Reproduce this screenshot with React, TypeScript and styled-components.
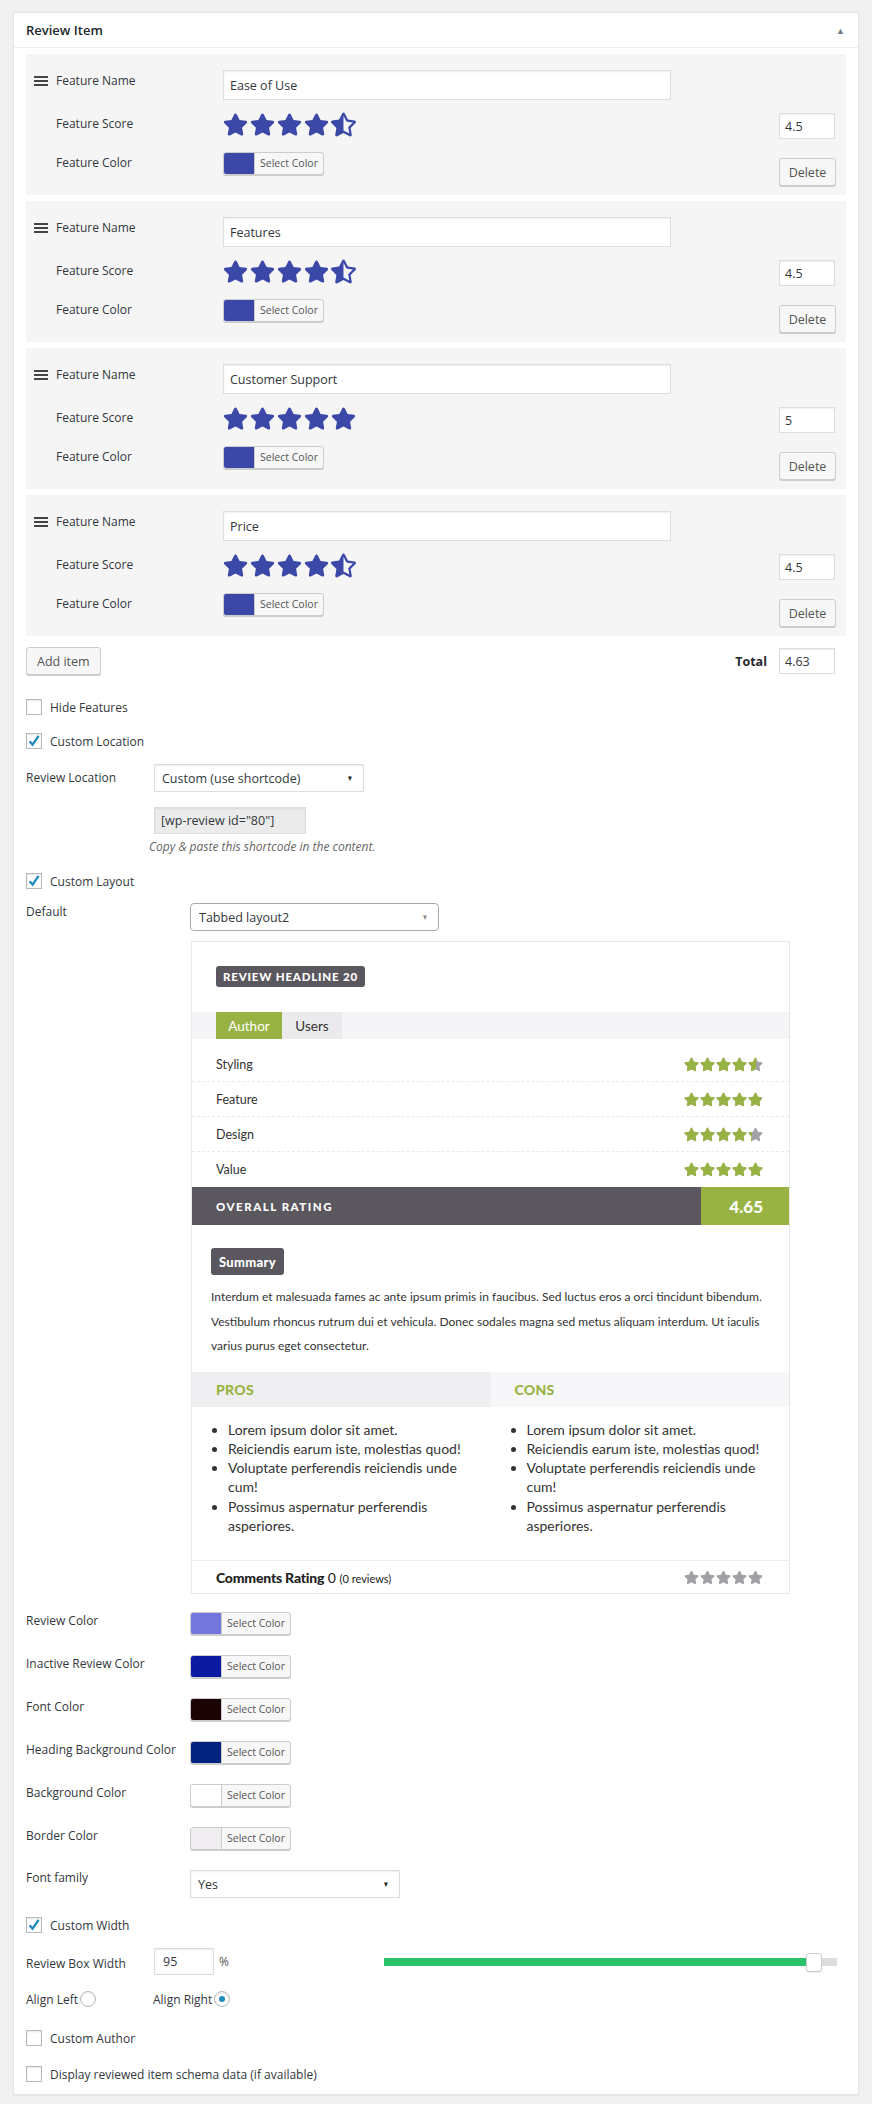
import React from 'react';
import styled, { createGlobalStyle } from 'styled-components';
import { FaStar, FaStarHalfAlt } from 'react-icons/fa';

const GlobalStyle = createGlobalStyle`
  * { box-sizing: border-box; }
  body {
    margin: 0;
    background: #f1f1f1;
    font-family: "Open Sans", "Noto Sans", sans-serif;
    font-size: 12px;
    color: #32373c;
  }
`;

const features = [
  { name: 'Ease of Use', score: '4.5' },
  { name: 'Features', score: '4.5' },
  { name: 'Customer Support', score: '5' },
  { name: 'Price', score: '4.5' },
];

const ratings = [
  { label: 'Styling', pct: 91 },
  { label: 'Feature', pct: 98 },
  { label: 'Design', pct: 86 },
  { label: 'Value', pct: 100 },
];

const listItems = [
  'Lorem ipsum dolor sit amet.',
  'Reiciendis earum iste, molestias quod!',
  'Voluptate perferendis reiciendis unde cum!',
  'Possimus aspernatur perferendis asperiores.',
];

const colorRows = [
  { label: 'Review Color', color: '#7476dc' },
  { label: 'Inactive Review Color', color: '#0b1aa0' },
  { label: 'Font Color', color: '#1b0204' },
  { label: 'Heading Background Color', color: '#03237f' },
  { label: 'Background Color', color: '#ffffff' },
  { label: 'Border Color', color: '#efedef' },
];

const boxWidth = 95;
const sliderPos = 93.2;

export default function App() {
  return (
    <Page>
      <GlobalStyle />
      <Panel>
        <PanelHeader>
          <PanelTitle>Review Item</PanelTitle>
          <Toggle>▲</Toggle>
        </PanelHeader>
        <PanelBody>
          <Items>
            {features.map((f) => (
              <Item key={f.name}>
                <Handle>
                  <svg width="14" height="10" viewBox="0 0 14 10">
                    <rect x="0" y="0" width="14" height="2" fill="#444" />
                    <rect x="0" y="4" width="14" height="2" fill="#444" />
                    <rect x="0" y="8" width="14" height="2" fill="#444" />
                  </svg>
                </Handle>
                <ItemLabel>Feature Name</ItemLabel>
                <NameInput>{f.name}</NameInput>
                <ItemLabel>Feature Score</ItemLabel>
                <EditStars>
                  <FaStar size={25} />
                  <FaStar size={25} />
                  <FaStar size={25} />
                  <FaStar size={25} />
                  {f.score === '5' ? <FaStar size={25} /> : <FaStarHalfAlt size={25} />}
                </EditStars>
                <SmallInput>{f.score}</SmallInput>
                <ItemLabel>Feature Color</ItemLabel>
                <ColorPick color="#3b48a8" />
                <DeleteButton>Delete</DeleteButton>
              </Item>
            ))}
          </Items>

          <ItemsFooter>
            <Button>Add item</Button>
            <TotalGroup>
              <TotalLabel>Total</TotalLabel>
              <SmallInput>4.63</SmallInput>
            </TotalGroup>
          </ItemsFooter>

          <CheckRow $gap={24}>
            <Checkbox />
            Hide Features
          </CheckRow>
          <CheckRow $gap={18}>
            <Checkbox checked />
            Custom Location
          </CheckRow>

          <FieldRow $gap={15} $center>
            <FieldLabel $width={128}>Review Location</FieldLabel>
            <Select $width={210}>
              Custom (use shortcode)
              <SelectArrow>▼</SelectArrow>
            </Select>
          </FieldRow>
          <Shortcode>[wp-review id="80"]</Shortcode>
          <Hint>Copy &amp; paste this shortcode in the content.</Hint>

          <CheckRow $gap={18}>
            <Checkbox checked />
            Custom Layout
          </CheckRow>

          <FieldRow $gap={14}>
            <FieldLabel $width={164}>Default</FieldLabel>
            <Select $width={249} $rounded>
              Tabbed layout2
              <SelectArrow $light>▼</SelectArrow>
            </Select>
          </FieldRow>

          <ReviewBox>
            <ReviewHead>
              <Badge>Review Headline 20</Badge>
            </ReviewHead>
            <TabBar>
              <Tab $active>Author</Tab>
              <Tab>Users</Tab>
            </TabBar>
            <RatingList>
              {ratings.map((r) => (
                <RatingRow key={r.label}>
                  <span>{r.label}</span>
                  <RatingStars pct={r.pct} />
                </RatingRow>
              ))}
            </RatingList>
            <OverallBar>
              <OverallLabel>Overall Rating</OverallLabel>
              <OverallScore>4.65</OverallScore>
            </OverallBar>
            <SummaryBlock>
              <SummaryBadge>Summary</SummaryBadge>
              <SummaryText>
                Interdum et malesuada fames ac ante ipsum primis in faucibus. Sed luctus eros a orci tincidunt
                bibendum. Vestibulum rhoncus rutrum dui et vehicula. Donec sodales magna sed metus aliquam interdum.
                Ut iaculis varius purus eget consectetur.
              </SummaryText>
            </SummaryBlock>
            <ProsCons>
              <ProsHead $tone="#efeef0">Pros</ProsHead>
              <ProsHead $tone="#f7f6f8">Cons</ProsHead>
              <ProsList>
                {listItems.map((t) => (
                  <li key={t}>{t}</li>
                ))}
              </ProsList>
              <ProsList>
                {listItems.map((t) => (
                  <li key={t}>{t}</li>
                ))}
              </ProsList>
            </ProsCons>
            <CommentsRow>
              <span>
                <strong>Comments Rating</strong> <CommentScore>0</CommentScore>{' '}
                <CommentCount>(0 reviews)</CommentCount>
              </span>
              <RatingStars pct={0} />
            </CommentsRow>
          </ReviewBox>

          {colorRows.map((c, i) => (
            <FieldRow key={c.label} $gap={i === 0 ? 18 : 20}>
              <FieldLabel $width={164}>{c.label}</FieldLabel>
              <ColorPick color={c.color} />
            </FieldRow>
          ))}

          <FieldRow $gap={20}>
            <FieldLabel $width={164} $lh={16}>Font family</FieldLabel>
            <Select $width={210}>
              Yes
              <SelectArrow>▼</SelectArrow>
            </Select>
          </FieldRow>

          <CheckRow $gap={19}>
            <Checkbox checked />
            Custom Width
          </CheckRow>

          <WidthRow>
            <FieldLabel $width={128}>Review Box Width</FieldLabel>
            <WidthInput>{boxWidth}</WidthInput>
            <Percent>%</Percent>
            <Slider>
              <SliderFill style={{ width: `${sliderPos + 1}%` }} />
              <SliderHandle style={{ left: `${sliderPos}%` }} />
            </Slider>
          </WidthRow>

          <AlignRow>
            <AlignOption $width={127}>
              Align Left
              <Radio />
            </AlignOption>
            <AlignOption>
              Align Right
              <Radio checked />
            </AlignOption>
          </AlignRow>

          <CheckRow $gap={23}>
            <Checkbox />
            Custom Author
          </CheckRow>
          <CheckRow $gap={20}>
            <Checkbox />
            Display reviewed item schema data (if available)
          </CheckRow>
        </PanelBody>
      </Panel>
    </Page>
  );
}

function Checkbox({ checked = false }: { checked?: boolean }) {
  return (
    <CheckBoxBox>
      {checked && (
        <svg width="14" height="14" viewBox="0 0 14 14">
          <path d="M2.6 7.2 L5.6 10.6 L11.6 1.8" fill="none" stroke="#1e8cbe" strokeWidth="2.3" />
        </svg>
      )}
    </CheckBoxBox>
  );
}

function Radio({ checked = false }: { checked?: boolean }) {
  return <RadioCircle>{checked && <RadioDot />}</RadioCircle>;
}

function ColorPick({ color }: { color: string }) {
  return (
    <ColorButton>
      <Swatch $color={color} />
      <ColorText>Select Color</ColorText>
    </ColorButton>
  );
}

function RatingStars({ pct }: { pct: number }) {
  const five = [0, 1, 2, 3, 4];
  return (
    <StarsWrap>
      {five.map((i) => (
        <FaStar key={i} size={15} />
      ))}
      <StarsFill style={{ width: `${pct}%` }}>
        {five.map((i) => (
          <FaStar key={i} size={15} />
        ))}
      </StarsFill>
    </StarsWrap>
  );
}

const Page = styled.div`
  padding: 12px 13px 13px;
`;

const Panel = styled.div`
  background: #fff;
  border: 1px solid #e5e5e5;
  box-shadow: 0 1px 1px rgba(0, 0, 0, 0.04);
`;

const PanelHeader = styled.div`
  display: flex;
  align-items: center;
  justify-content: space-between;
  height: 35px;
  padding: 0 12px;
  border-bottom: 1px solid #eee;
`;

const PanelTitle = styled.h2`
  margin: 0;
  font-size: 13px;
  font-weight: 600;
  color: #23282d;
`;

const Toggle = styled.span`
  font-size: 9px;
  color: #72777c;
  margin-right: 1px;
`;

const PanelBody = styled.div`
  display: flex;
  flex-direction: column;
  align-items: flex-start;
  padding: 6px 12px 12px;
`;

const Items = styled.div`
  display: flex;
  flex-direction: column;
  gap: 6px;
  width: 100%;
`;

const Item = styled.div`
  display: grid;
  grid-template-columns: 30px 167px 1fr 57px;
  grid-template-rows: 30px 26px 34px;
  row-gap: 13px;
  justify-items: start;
  padding: 16px 10px 9px 0;
  background: #f5f5f5;
`;

const Handle = styled.div`
  padding: 6px 0 0 8px;
  line-height: 0;
`;

const ItemLabel = styled.div`
  grid-column: 2;
  padding-top: 2px;
  line-height: 18px;
  color: #32373c;
`;

const fieldBox = `
  background: #fff;
  border: 1px solid #ddd;
  box-shadow: inset 0 1px 2px rgba(0, 0, 0, 0.07);
  color: #32373c;
  display: flex;
  align-items: center;
`;

const NameInput = styled.div`
  ${fieldBox}
  width: 448px;
  height: 30px;
  padding: 0 6px;
  font-size: 12.5px;
`;

const EditStars = styled.div`
  display: flex;
  gap: 2px;
  height: 22px;
  align-items: center;
  color: #3b48a8;
`;

const SmallInput = styled.div`
  ${fieldBox}
  width: 56px;
  height: 26px;
  padding: 0 5px;
  font-size: 12.5px;
`;

const Button = styled.div`
  display: inline-flex;
  align-items: center;
  height: 28px;
  padding: 0 10px;
  background: #f7f7f7;
  border: 1px solid #ccc;
  border-radius: 3px;
  box-shadow: 0 1px 0 #ccc;
  color: #555;
  font-size: 12.5px;
`;

const DeleteButton = styled(Button)`
  align-self: end;
  width: 57px;
  justify-content: center;
  padding: 0;
`;

const ColorButton = styled.div`
  display: inline-flex;
  align-self: start;
  justify-self: start;
  height: 23px;
  border: 1px solid #ccc;
  border-radius: 3px;
  box-shadow: 0 1px 0 #ccc;
  overflow: hidden;
  background: #f7f7f7;
`;

const Swatch = styled.span<{ $color: string }>`
  width: 30px;
  background: ${(p) => p.$color};
`;

const ColorText = styled.span`
  width: 69px;
  border-left: 1px solid #ccc;
  font-size: 10.5px;
  line-height: 21px;
  text-align: center;
  color: #555;
`;

const ItemsFooter = styled.div`
  display: flex;
  align-items: center;
  justify-content: space-between;
  width: 100%;
  margin-top: 11px;
  padding-right: 11px;
`;

const TotalGroup = styled.div`
  display: flex;
  align-items: center;
  gap: 12px;
`;

const TotalLabel = styled.span`
  font-weight: 700;
  font-size: 12.5px;
  color: #23282d;
`;

const CheckRow = styled.div<{ $gap: number }>`
  display: flex;
  align-items: center;
  gap: 8px;
  height: 16px;
  margin-top: ${(p) => p.$gap}px;
  color: #32373c;
  white-space: nowrap;
`;

const CheckBoxBox = styled.span`
  width: 16px;
  height: 16px;
  display: flex;
  align-items: center;
  justify-content: center;
  border: 1px solid #b4b9be;
  background: #fff;
  box-shadow: inset 0 1px 2px rgba(0, 0, 0, 0.1);
`;

const FieldRow = styled.div<{ $gap: number; $center?: boolean }>`
  display: flex;
  align-items: ${(p) => (p.$center ? 'center' : 'flex-start')};
  margin-top: ${(p) => p.$gap}px;
`;

const FieldLabel = styled.div<{ $width: number; $lh?: number }>`
  width: ${(p) => p.$width}px;
  line-height: ${(p) => p.$lh ?? 18}px;
  color: #32373c;
`;

const Select = styled.div<{ $width: number; $rounded?: boolean }>`
  ${fieldBox}
  position: relative;
  width: ${(p) => p.$width}px;
  height: 28px;
  font-size: 12.5px;
  border-color: ${(p) => (p.$rounded ? '#aaa' : '#ddd')};
  border-radius: ${(p) => (p.$rounded ? 4 : 0)}px;
  box-shadow: ${(p) => (p.$rounded ? 'none' : 'inset 0 1px 2px rgba(0,0,0,0.07)')};
  padding: 0 7px 0 ${(p) => (p.$rounded ? 8 : 7)}px;
`;

const SelectArrow = styled.span<{ $light?: boolean }>`
  position: absolute;
  right: 9px;
  top: 50%;
  transform: translateY(-55%) scaleX(0.8);
  font-size: 8px;
  color: ${(p) => (p.$light ? '#888' : '#222')};
`;

const Shortcode = styled.div`
  ${fieldBox}
  margin: 15px 0 0 128px;
  width: 152px;
  height: 27px;
  padding: 0 6px;
  background: #ebebeb;
  font-size: 12.5px;
`;

const Hint = styled.p`
  margin: 5px 0 0 123px;
  font-style: italic;
  color: #666;
  line-height: 16px;
`;

const ReviewBox = styled.div`
  margin: 10px 0 0 165px;
  width: 599px;
  border: 1px solid #e7e7e7;
  background: #fff;
  font-family: Lato, "Open Sans", sans-serif;
  color: #333;
`;

const ReviewHead = styled.div`
  display: flex;
  padding: 24px 24px 0;
`;

const Badge = styled.span`
  height: 21px;
  padding: 0 7px;
  background: #5b575e;
  border-radius: 3px;
  color: #fff;
  font-size: 11.5px;
  font-weight: 900;
  line-height: 21px;
  letter-spacing: 0.8px;
  text-transform: uppercase;
`;

const TabBar = styled.div`
  display: flex;
  margin-top: 25px;
  height: 27px;
  padding-left: 24px;
  background: #f5f4f6;
`;

const Tab = styled.span<{ $active?: boolean }>`
  display: flex;
  align-items: center;
  justify-content: center;
  width: ${(p) => (p.$active ? 66 : 60)}px;
  background: ${(p) => (p.$active ? '#98b343' : '#ebeaed')};
  color: ${(p) => (p.$active ? '#fff' : '#333')};
  font-size: 13.5px;
`;

const RatingList = styled.div`
  padding-top: 8px;
`;

const RatingRow = styled.div`
  display: flex;
  align-items: center;
  justify-content: space-between;
  height: 35px;
  padding: 0 26px 0 24px;
  font-size: 12.5px;
  border-bottom: 1px dashed #e9e9e9;
  &:last-child {
    border-bottom: none;
  }
`;

const StarsWrap = styled.span`
  position: relative;
  display: inline-flex;
  gap: 1px;
  color: #a4a1a6;
`;

const StarsFill = styled.span`
  position: absolute;
  top: 0;
  left: 0;
  height: 100%;
  display: inline-flex;
  gap: 1px;
  overflow: hidden;
  color: #98b343;
  svg {
    flex-shrink: 0;
  }
`;

const OverallBar = styled.div`
  display: flex;
  height: 38px;
  background: #5b575e;
  color: #fff;
`;

const OverallLabel = styled.span`
  flex: 1;
  display: flex;
  align-items: center;
  padding-left: 24px;
  font-size: 11.5px;
  font-weight: 900;
  letter-spacing: 1.5px;
  text-transform: uppercase;
`;

const OverallScore = styled.span`
  width: 88px;
  display: flex;
  align-items: center;
  justify-content: flex-end;
  padding-right: 26px;
  background: #98b343;
  font-size: 17px;
  font-weight: 900;
`;

const SummaryBlock = styled.div`
  padding: 23px 20px 0 19px;
`;

const SummaryBadge = styled.span`
  display: inline-flex;
  align-items: center;
  height: 27px;
  padding: 0 8px;
  background: #5b575e;
  border-radius: 3px;
  color: #fff;
  font-size: 13px;
  font-weight: 900;
  letter-spacing: 0.3px;
`;

const SummaryText = styled.p`
  margin: 10px 0 0;
  font-size: 12px;
  line-height: 24.5px;
`;

const ProsCons = styled.div`
  display: grid;
  grid-template-columns: 1fr 1fr;
  margin-top: 13px;
`;

const ProsHead = styled.div<{ $tone: string }>`
  display: flex;
  align-items: center;
  height: 35px;
  padding-left: 24px;
  background: ${(p) => p.$tone};
  color: #98b343;
  font-size: 14px;
  font-weight: 900;
  letter-spacing: 0.3px;
  text-transform: uppercase;
`;

const ProsList = styled.ul`
  margin: 0;
  padding: 13px 18px 25px 36px;
  font-size: 14px;
  line-height: 19.3px;
  color: #333;
`;

const CommentsRow = styled.div`
  display: flex;
  align-items: center;
  justify-content: space-between;
  height: 33px;
  padding: 0 26px 0 24px;
  border-top: 1px solid #eee;
  font-size: 14px;
  color: #222;
  strong {
    font-weight: 900;
    letter-spacing: -0.2px;
  }
`;

const CommentScore = styled.span`
  font-size: 14px;
`;

const CommentCount = styled.span`
  font-size: 11px;
`;

const WidthRow = styled.div`
  display: flex;
  align-items: center;
  width: 100%;
  margin-top: 15px;
  padding-right: 9px;
  ${FieldLabel} {
    padding-top: 4px;
  }
`;

const WidthInput = styled.div`
  ${fieldBox}
  width: 60px;
  height: 27px;
  padding: 0 8px;
  font-size: 12.5px;
`;

const Percent = styled.span`
  margin-left: 5px;
  color: #555;
`;

const Slider = styled.div`
  position: relative;
  margin-left: auto;
  width: 453px;
  height: 8px;
  background: #ddd;
`;

const SliderFill = styled.div`
  height: 100%;
  background: #2bc26c;
`;

const SliderHandle = styled.div`
  position: absolute;
  top: -5px;
  width: 16px;
  height: 19px;
  background: #fff;
  border: 1px solid #ccc;
  border-radius: 3px;
  box-shadow: 0 1px 1px rgba(0, 0, 0, 0.08);
`;

const AlignRow = styled.div`
  display: flex;
  align-items: center;
  margin-top: 16px;
  height: 16px;
`;

const AlignOption = styled.div<{ $width?: number }>`
  display: flex;
  align-items: center;
  gap: 2px;
  width: ${(p) => (p.$width ? `${p.$width}px` : 'auto')};
  color: #32373c;
`;

const RadioCircle = styled.span`
  width: 16px;
  height: 16px;
  border-radius: 50%;
  border: 1px solid #b4b9be;
  background: #fff;
  box-shadow: inset 0 1px 2px rgba(0, 0, 0, 0.1);
  display: flex;
  align-items: center;
  justify-content: center;
`;

const RadioDot = styled.span`
  width: 6px;
  height: 6px;
  border-radius: 50%;
  background: #1e8cbe;
`;
